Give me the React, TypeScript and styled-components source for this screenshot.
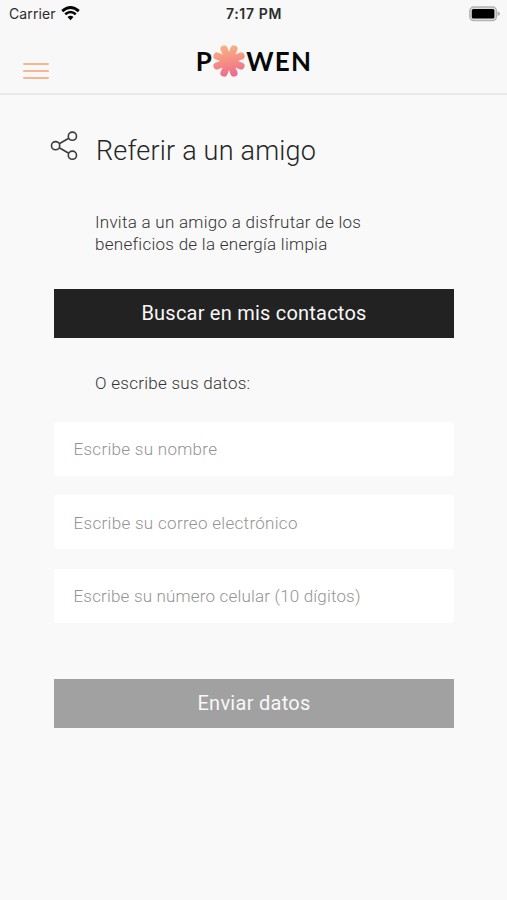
import React from "react";
import styled, { createGlobalStyle } from "styled-components";

const GlobalStyle = createGlobalStyle`
  * { box-sizing: border-box; }
  body { margin: 0; background: #f8f8f8; }
`;

const Screen = styled.div`
  width: 507px;
  height: 900px;
  overflow: hidden;
  display: flex;
  flex-direction: column;
  background: #f9f9f9;
  color: #252525;
  font-family: Roboto, "Liberation Sans", sans-serif;
  font-weight: 300;
`;

const TopArea = styled.header`
  height: 95px;
  flex: none;
  background: #f8f8f8;
  border-bottom: 2px solid #e9e9ea;
`;

const StatusBar = styled.div`
  height: 28px;
  padding: 0 7px 0 9px;
  display: grid;
  grid-template-columns: 1fr auto 1fr;
  align-items: center;
  font-family: Inter, sans-serif;
  font-size: 14px;
  line-height: 28px;
  color: #2b2b2b;
`;

const Carrier = styled.div`
  display: flex;
  align-items: center;
  gap: 6px;
  font-weight: 400;
  letter-spacing: 0.1px;
  svg { margin: -1px 0 0 -1px; }
`;

const Clock = styled.div`
  font-weight: 600;
  letter-spacing: 0.65px;
  margin-right: 1px;
`;

const Battery = styled.svg`
  justify-self: end;
  margin-top: -1px;
`;

const NavBar = styled.div`
  height: 65px;
  padding: 0 23px;
  display: grid;
  grid-template-columns: 1fr auto 1fr;
`;

const MenuButton = styled.button`
  width: 26px;
  height: 16px;
  margin: 35px 0 0;
  padding: 0;
  border: 0;
  background: none;
  display: flex;
  flex-direction: column;
  justify-content: space-between;
`;

const MenuLine = styled.span`
  height: 2.4px;
  width: 26px;
  border-radius: 1px;
  background: #f8b593;
`;

const Logo = styled.div`
  height: 36px;
  margin: 15px 0 0 1px;
  display: flex;
  align-items: center;
  font-family: Lato, sans-serif;
  font-weight: 700;
  font-size: 26px;
  line-height: 34px;
  color: #080808;
  svg { flex: none; margin: 0 0 0 0.5px; }
`;

const LogoText = styled.span<{ $spacing: number }>`
  letter-spacing: ${(p) => p.$spacing}px;
`;

const Content = styled.main`
  padding: 0 53px 0 54px;
  display: flex;
  flex-direction: column;
`;

const TitleRow = styled.div`
  display: flex;
  margin: 35px 0 0 -4px;
  height: 40px;
  align-items: flex-start;
`;

const Title = styled.h1`
  margin: 1px 0 0 17px;
  font-size: 27px;
  font-weight: 300;
  line-height: 40px;
  letter-spacing: 0.2px;
  white-space: nowrap;
`;

const Text = styled.p<{ $top: number; $spacing: number }>`
  margin: ${(p) => p.$top}px 0 0 41px;
  font-size: 17px;
  line-height: 22px;
  letter-spacing: ${(p) => p.$spacing}px;
  color: #333;
  white-space: nowrap;
`;

const ActionButton = styled.button<{ $tone: string; $top: number; $spacing: number }>`
  height: 49px;
  margin: ${(p) => p.$top}px 0 0;
  padding: 0 0 1px;
  border: 0;
  background: ${(p) => p.$tone};
  color: #f8f8f8;
  font-family: inherit;
  font-size: 20px;
  font-weight: 400;
  letter-spacing: ${(p) => p.$spacing}px;
`;

const Fields = styled.div`
  display: flex;
  flex-direction: column;
  gap: 19.5px;
  margin-top: 27.5px;
`;

const Field = styled.input<{ $spacing: number }>`
  height: 54px;
  width: 100%;
  padding: 1px 19px 0 19.5px;
  border: 0;
  border-radius: 2px;
  background: #fff;
  font-family: inherit;
  font-size: 17px;
  font-weight: 300;
  letter-spacing: ${(p) => p.$spacing}px;
  &::placeholder { color: #949494; opacity: 1; }
`;

const petals = [22.5, 67.5, 112.5, 157.5, 202.5, 247.5, 292.5, 337.5];

function Flower() {
  return (
    <svg width="34" height="34" viewBox="-17 -17 34 34" aria-hidden="true">
      <defs>
        <linearGradient id="petals" gradientUnits="userSpaceOnUse" x1="-3" y1="-16" x2="3" y2="16">
          <stop offset="0" stopColor="#fab282" />
          <stop offset="0.5" stopColor="#f58f83" />
          <stop offset="1" stopColor="#e96991" />
        </linearGradient>
        <clipPath id="flower">
          <circle r="9" />
          {petals.map((a) => (
            <path key={a} transform={`rotate(${a})`} d="M-3.2 0L-3.6 -13A3.6 3.6 0 0 1 3.6 -13L3.2 0Z" />
          ))}
        </clipPath>
      </defs>
      <rect x="-17" y="-17" width="34" height="34" fill="url(#petals)" clipPath="url(#flower)" />
    </svg>
  );
}

export default function App() {
  return (
    <Screen>
      <GlobalStyle />
      <TopArea>
        <StatusBar>
          <Carrier>
            <span>Carrier</span>
            <svg width="19" height="15" viewBox="0 0 19 15" fill="none" stroke="#050505">
              <path d="M1.2 5.1Q9.5 -2 17.8 5.1" strokeWidth="2.8" />
              <path d="M4.2 8.3Q9.5 3.7 14.8 8.3" strokeWidth="2.6" />
              <path d="M6.5 11Q9.5 8.3 12.5 11L9.5 14.2Z" fill="#050505" stroke="none" />
            </svg>
          </Carrier>
          <Clock>7:17 PM</Clock>
          <Battery width="31" height="16" viewBox="0 0 31 16">
            <rect x="0.8" y="1" width="26.7" height="13.6" rx="4" fill="#ddd" stroke="#b3b3b3" strokeWidth="1.4" />
            <rect x="2.8" y="3" width="22.6" height="9.6" rx="1.5" fill="#000" />
            <path d="M28.7 5.6Q31 6.3 31 7.8T28.7 10Z" fill="#a9a9a9" />
          </Battery>
        </StatusBar>
        <NavBar>
          <MenuButton aria-label="Menú">
            <MenuLine />
            <MenuLine />
            <MenuLine />
          </MenuButton>
          <Logo>
            <LogoText $spacing={0}>P</LogoText>
            <Flower />
            <LogoText $spacing={1.2}>WEN</LogoText>
          </Logo>
        </NavBar>
      </TopArea>
      <Content>
        <TitleRow>
          <svg width="29" height="32" viewBox="0 0 29 32" fill="none" stroke="#3c3c3c" strokeWidth="1.6">
            <circle cx="5.6" cy="15.7" r="4.1" />
            <circle cx="22.4" cy="6.2" r="4.1" />
            <circle cx="22.4" cy="25.2" r="4.1" />
            <path d="M9.2 13.7L18.8 8.2M9.2 17.7L18.8 23.2" />
          </svg>
          <Title>Referir a un amigo</Title>
        </TitleRow>
        <Text $top={41} $spacing={0.27}>
          Invita a un amigo a disfrutar de los
          <br />
          beneficios de la energía limpia
        </Text>
        <ActionButton $tone="#222" $top={34} $spacing={0.22}>Buscar en mis contactos</ActionButton>
        <Text $top={34} $spacing={0.27}>O escribe sus datos:</Text>
        <Fields>
          <Field $spacing={0.29} placeholder="Escribe su nombre" />
          <Field $spacing={0.31} placeholder="Escribe su correo electrónico" />
          <Field $spacing={0.18} placeholder="Escribe su número celular (10 dígitos)" />
        </Fields>
        <ActionButton $tone="#a1a1a1" $top={56.5} $spacing={0.28}>Enviar datos</ActionButton>
      </Content>
    </Screen>
  );
}
